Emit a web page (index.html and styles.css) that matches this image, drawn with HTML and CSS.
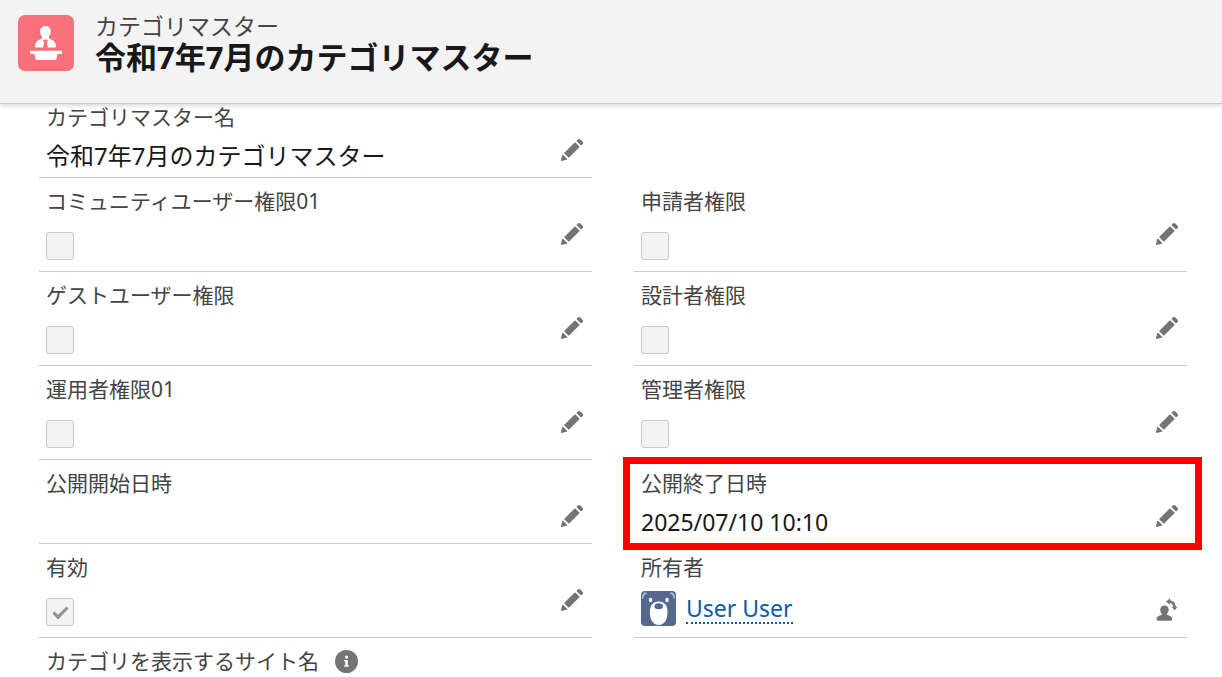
FILE: index.html
```html
<!DOCTYPE html>
<html lang="ja">
<head>
<meta charset="utf-8">
<meta name="viewport" content="width=device-width, initial-scale=1">
<title>令和7年7月のカテゴリマスター</title>
<link rel="stylesheet" href="styles.css">
</head>
<body>
<svg class="sprite" aria-hidden="true">
  <symbol id="edit" viewBox="0 0 52 52"><path d="M9.5 33.4l8.9 8.9c.4.4 1 .4 1.4 0L42 20c.4-.4.4-1 0-1.4l-8.8-8.8c-.4-.4-1-.4-1.4 0L9.5 32.1c-.4.4-.4 1 0 1.3zM36.1 5.7c-.4.4-.4 1 0 1.4l8.8 8.8c.4.4 1 .4 1.4 0l2.5-2.5c1.6-1.5 1.6-3.9 0-5.5l-4.7-4.7c-1.6-1.6-4.1-1.6-5.7 0l-2.3 2.500zM2.1 48.2c-.2 1 .7 1.9 1.7 1.7l10.9-2.6c.4-.1.7-.3.9-.5l.2-.2c.2-.2.3-.9-.1-1.3l-9-9c-.4-.4-1.1-.3-1.3-.1l-.2.2c-.3.3-.4.6-.5.9L2.1 48.2z"/></symbol>
</svg>

<header class="page-header">
  <svg class="entity-icon" viewBox="0 0 56 56" aria-hidden="true">
    <rect width="56" height="56" rx="7" fill="#f7707b"/>
    <g fill="#fff">
      <path d="M27.500 11c3.300 0 5.300 2.400 5.300 5.500 0 2-.8 3.700-1.900 4.800v1.500c0 .6.500 1 1 1.200 3.500 1.300 6 3.300 6 6.500v1.100c0 .6-.5 1-1 1H29.800l-.9-5.400 1.100-1.800-1-.9h-3l-1 .9 1.100 1.800-.9 5.400H18c-.6 0-1-.4-1-1v-1.100c0-3.200 2.500-5.200 6-6.500.6-.2 1-.6 1-1.200v-1.500c-1.100-1.100-1.900-2.800-1.900-4.800 0-3.100 2.100-5.500 5.400-5.500z"/>
      <path d="M13 35.700h30c.6 0 1 .4 1 1V38c0 .6-.4 1-1 1h-3.500l-1.100 5c-.1.700-.6 1-1.200 1H18.800c-.6 0-1.100-.3-1.200-1l-1.100-5H13c-.6 0-1-.4-1-1v-1.300c0-.6.4-1 1-1z"/>
    </g>
  </svg>
  <div class="heading">
    <p class="entity-name">カテゴリマスター</p>
    <h1 class="record-title">令和7年7月のカテゴリマスター</h1>
  </div>
</header>

<main class="details">
  <div class="field field-first">
    <span class="label">カテゴリマスター名</span>
    <div class="body"><span class="value">令和7年7月のカテゴリマスター</span><button class="edit" aria-label="カテゴリマスター名を編集"><svg><use href="#edit"/></svg></button></div>
  </div>
  <div></div>

  <div class="field">
    <label class="label" for="community">コミュニティユーザー権限01</label>
    <div class="body"><input class="check" type="checkbox" id="community" disabled><button class="edit" aria-label="コミュニティユーザー権限01を編集"><svg><use href="#edit"/></svg></button></div>
  </div>
  <div class="field">
    <label class="label" for="applicant">申請者権限</label>
    <div class="body"><input class="check" type="checkbox" id="applicant" disabled><button class="edit" aria-label="申請者権限を編集"><svg><use href="#edit"/></svg></button></div>
  </div>

  <div class="field">
    <label class="label" for="guest">ゲストユーザー権限</label>
    <div class="body"><input class="check" type="checkbox" id="guest" disabled><button class="edit" aria-label="ゲストユーザー権限を編集"><svg><use href="#edit"/></svg></button></div>
  </div>
  <div class="field">
    <label class="label" for="designer">設計者権限</label>
    <div class="body"><input class="check" type="checkbox" id="designer" disabled><button class="edit" aria-label="設計者権限を編集"><svg><use href="#edit"/></svg></button></div>
  </div>

  <div class="field">
    <label class="label" for="operator">運用者権限01</label>
    <div class="body"><input class="check" type="checkbox" id="operator" disabled><button class="edit" aria-label="運用者権限01を編集"><svg><use href="#edit"/></svg></button></div>
  </div>
  <div class="field">
    <label class="label" for="admin">管理者権限</label>
    <div class="body"><input class="check" type="checkbox" id="admin" disabled><button class="edit" aria-label="管理者権限を編集"><svg><use href="#edit"/></svg></button></div>
  </div>

  <div class="field">
    <span class="label">公開開始日時</span>
    <div class="body"><span class="value"></span><button class="edit" aria-label="公開開始日時を編集"><svg><use href="#edit"/></svg></button></div>
  </div>
  <div class="field field-marked">
    <span class="label">公開終了日時</span>
    <div class="body"><span class="value value-latin">2025/07/10 10:10</span><button class="edit" aria-label="公開終了日時を編集"><svg><use href="#edit"/></svg></button></div>
  </div>

  <div class="field">
    <label class="label" for="active">有効</label>
    <div class="body"><input class="check" type="checkbox" id="active" checked disabled><button class="edit" aria-label="有効を編集"><svg><use href="#edit"/></svg></button></div>
  </div>
  <div class="field">
    <span class="label">所有者</span>
    <div class="body">
      <div class="owner">
        <svg class="avatar" viewBox="0 0 35 35" aria-hidden="true">
          <rect width="35" height="35" rx="4" fill="#54698d"/>
          <path d="M1 7C1 4 2 1.500 5 1.500L6.500 2C3.500 3 2.500 5 2 8zM34 7c0-3-1-5.500-4-5.500l-1.500.5c3 1 4 3 4.500 6z" fill="#b8c3d6"/>
          <ellipse cx="9.500" cy="9" rx="1.700" ry="2.200" fill="#fff"/>
          <ellipse cx="26" cy="9" rx="1.700" ry="2.200" fill="#fff"/>
          <path d="M17.700 10.500c5.500 0 8.800 3.500 8.800 10.500 0 7.500-3 13-8.800 13s-8.800-5.500-8.800-13c0-7 3.300-10.500 8.800-10.500z" fill="#fff"/>
          <ellipse cx="17.700" cy="15.200" rx="4.300" ry="3" fill="#54698d"/>
        </svg>
        <a class="owner-link" href="#">User User</a>
      </div>
      <button class="edit edit-owner" aria-label="所有者を変更"><svg viewBox="0 0 24 24">
        <path d="M9.500 7.500c2.600 0 4.200 1.900 4.200 4.300 0 1.600-.7 2.700-1.500 3.700-.4.500-.2 1.200.5 1.500 2.800 1 4.500 1.900 4.500 4 0 1.200-.7 1.700-1.700 1.700H3.200c-1 0-1.700-.5-1.700-1.700 0-2.100 1.800-3 4.600-4 .7-.3.900-1 .5-1.500-.8-.9-1.400-2.100-1.400-3.700 0-2.400 1.700-4.300 4.300-4.300z"/>
        <path d="M13.500 3.500c4 0 6 2 6.200 6" fill="none" stroke="#747474" stroke-width="2.600"/>
        <path d="M11 3.500l4-3.300v6.600zM16.700 8.800h5.800l-2.900 3.800z"/>
      </svg></button>
    </div>
  </div>

  <div class="field field-last">
    <span class="label">カテゴリを表示するサイト名</span>
    <button class="info" aria-label="ヘルプ"><svg viewBox="0 0 22 22">
      <circle cx="11" cy="11" r="11"/>
      <circle cx="11" cy="6.800" r="1.500" fill="#fff"/>
      <path d="M8.800 9.500h3.400v5h1v1.600H8.800v-1.600h1V11h-1z" fill="#fff"/>
    </svg></button>
  </div>
</main>
</body>
</html>
```

FILE: styles.css
```css
*,
*::before,
*::after {
  box-sizing: border-box;
}

body {
  margin: 0;
  background: #fff;
  color: #181818;
  font-family: "Noto Sans", "Noto Sans CJK JP", sans-serif;
}

.sprite {
  display: none;
}

.page-header {
  display: flex;
  align-items: flex-start;
  gap: 21px;
  padding: 15px 18px 26px;
  background: #f3f3f3;
  border-bottom: 1px solid #c9c9c9;
  box-shadow: 0 2px 4px rgba(0, 0, 0, 0.14);
}

.entity-icon {
  flex: none;
  width: 56px;
  height: 56px;
}

.heading {
  display: flex;
  flex-direction: column;
}

.entity-name {
  margin: 0;
  color: #444;
  font-size: 23px;
  line-height: 22px;
}

.record-title {
  margin: 0;
  font-size: 31px;
  font-weight: 700;
  line-height: 40px;
}

.details {
  display: grid;
  grid-template-columns: 1fr 1fr;
  column-gap: 42px;
  padding: 0 35px 0 39px;
}

.field {
  position: relative;
  padding: 7px 7px 3px;
  border-bottom: 1px solid #c9c9c9;
}

.field-first {
  padding-top: 0;
  margin-top: -3px;
}

.field-last {
  display: flex;
  align-items: center;
  gap: 16px;
  padding-bottom: 0;
  border-bottom: 0;
}

.field-marked::after {
  content: "";
  position: absolute;
  inset: -3px -15px -7px -11px;
  border: 7px solid #f00;
  pointer-events: none;
}

.label {
  display: block;
  color: #444;
  font-size: 21px;
  line-height: 32px;
}

.body {
  display: flex;
  align-items: flex-start;
  justify-content: space-between;
}

.value {
  margin-top: 5px;
  min-height: 36px;
  font-size: 24px;
  line-height: 36px;
}

.value-latin {
  font-size: 23px;
}

.check {
  appearance: none;
  display: grid;
  place-items: center;
  width: 28px;
  height: 28px;
  margin: 15px 0 8px;
  background: #f3f3f3;
  border: 1px solid #c9c9c9;
  border-radius: 3px;
}

.check:checked::before {
  content: "";
  width: 15px;
  height: 8px;
  border: solid #939393;
  border-width: 0 0 3px 3px;
  transform: translateY(-1px) rotate(-45deg);
}

.edit {
  width: 24px;
  height: 24px;
  margin: 5px 1px 0 0;
  padding: 0;
  background: none;
  border: 0;
}

.edit svg,
.info svg {
  display: block;
  width: 100%;
  height: 100%;
  fill: #747474;
}

.edit-owner {
  margin-top: 15px;
}

.owner {
  display: flex;
  align-items: center;
  gap: 10px;
  margin-top: 8px;
}

.avatar {
  width: 35px;
  height: 35px;
}

.owner-link {
  color: #0b5cab;
  border-bottom: 2px dotted #0b5cab;
  font-size: 23px;
  line-height: 28px;
  text-decoration: none;
}

.info {
  width: 23px;
  height: 23px;
  padding: 0;
  background: none;
  border: 0;
}
```
